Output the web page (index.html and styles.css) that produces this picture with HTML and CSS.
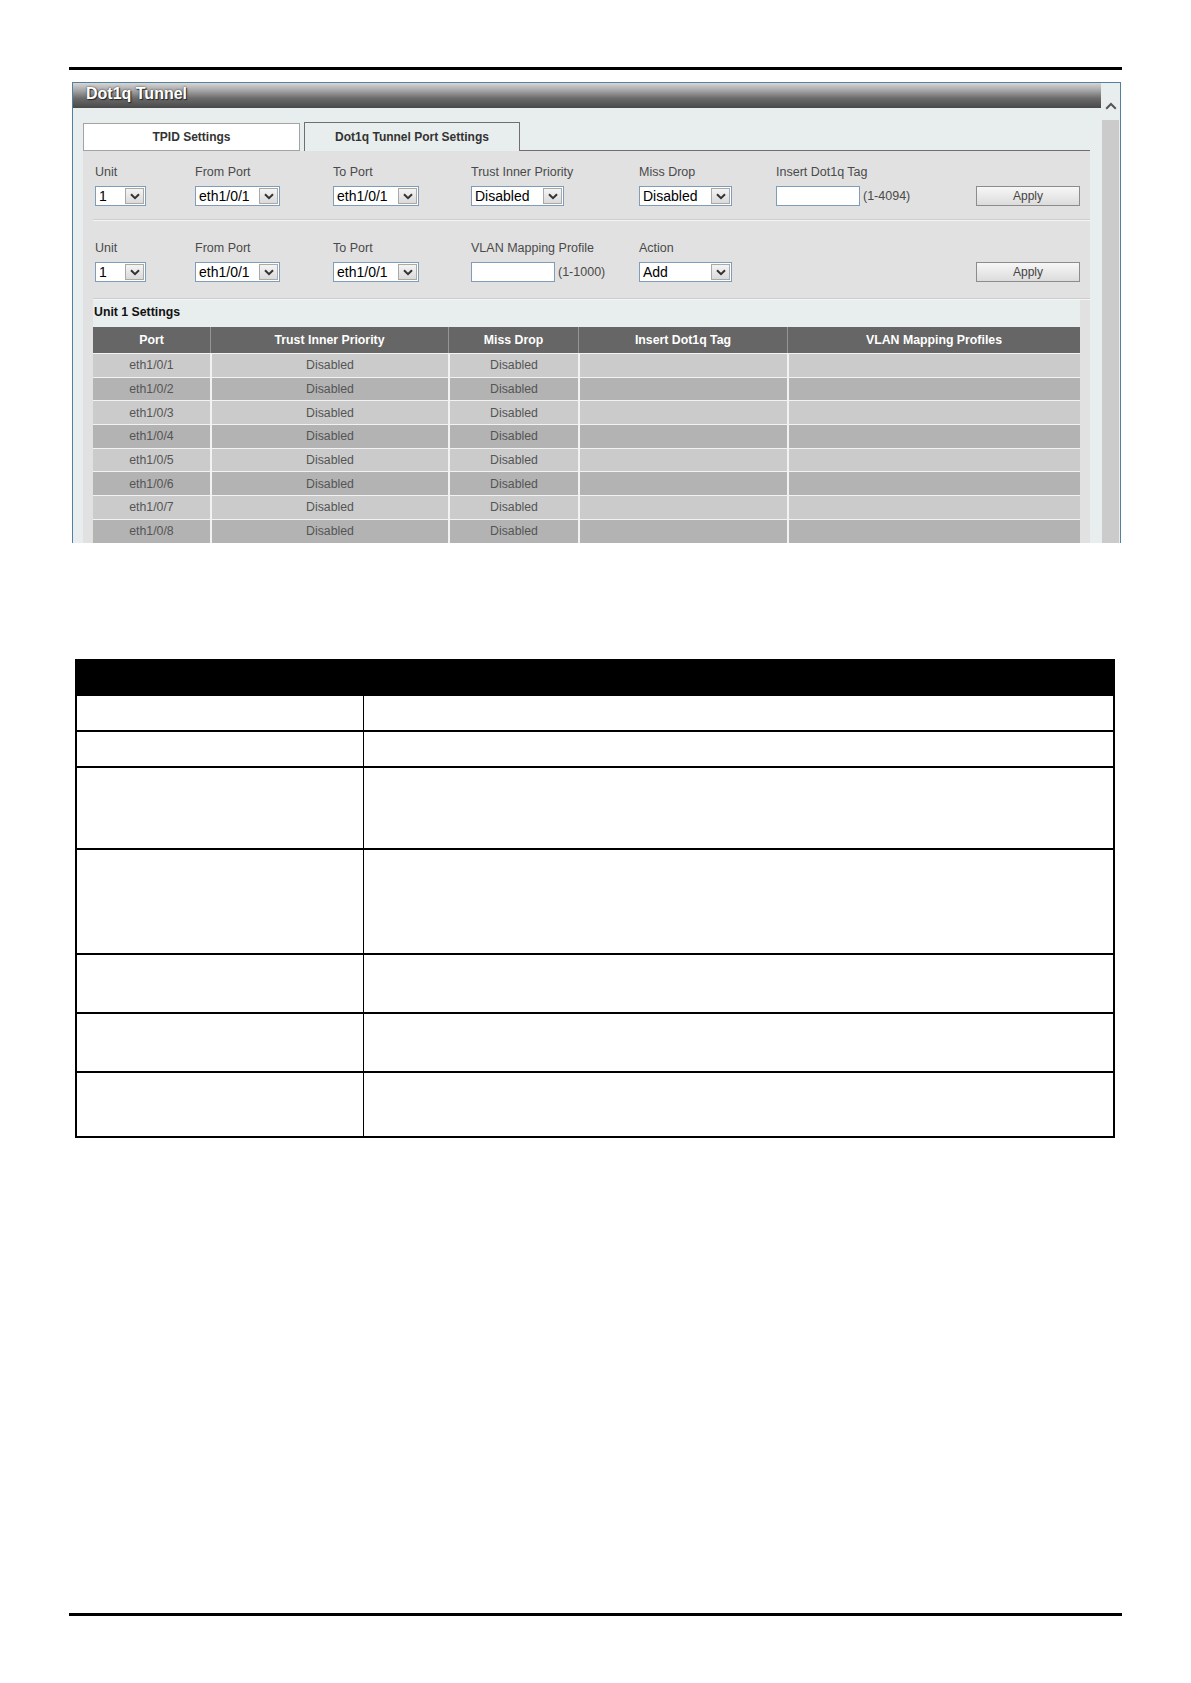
FILE: index.html
```html
<!DOCTYPE html>
<html>
<head>
<meta charset="utf-8">
<title>Dot1q Tunnel</title>
<link rel="stylesheet" href="styles.css">
</head>
<body>
<div class="page">
  <div class="rule top"></div>

  <div class="panel">
    <div class="main">
      <div class="titlebar">Dot1q Tunnel</div>
      <div class="body">
        <div class="tabs">
          <div class="tab">TPID Settings</div>
          <div class="tab active">Dot1q Tunnel Port Settings</div>
          <div class="tabfill"></div>
        </div>
        <div class="formarea">
          <div class="frow r1">
            <div class="field"><div class="lbl">Unit</div>
              <div class="sel w51"><span class="val">1</span><span class="dd"><svg width="10" height="7" viewBox="0 0 10 7"><path d="M1 1.2 L5 5.2 L9 1.2" fill="none" stroke="#333" stroke-width="2"/></svg></span></div></div>
            <div class="field"><div class="lbl">From Port</div>
              <div class="sel w85"><span class="val">eth1/0/1</span><span class="dd"><svg width="10" height="7" viewBox="0 0 10 7"><path d="M1 1.2 L5 5.2 L9 1.2" fill="none" stroke="#333" stroke-width="2"/></svg></span></div></div>
            <div class="field"><div class="lbl">To Port</div>
              <div class="sel w86"><span class="val">eth1/0/1</span><span class="dd"><svg width="10" height="7" viewBox="0 0 10 7"><path d="M1 1.2 L5 5.2 L9 1.2" fill="none" stroke="#333" stroke-width="2"/></svg></span></div></div>
            <div class="field"><div class="lbl">Trust Inner Priority</div>
              <div class="sel w93"><span class="val">Disabled</span><span class="dd"><svg width="10" height="7" viewBox="0 0 10 7"><path d="M1 1.2 L5 5.2 L9 1.2" fill="none" stroke="#333" stroke-width="2"/></svg></span></div></div>
            <div class="field"><div class="lbl">Miss Drop</div>
              <div class="sel w93"><span class="val">Disabled</span><span class="dd"><svg width="10" height="7" viewBox="0 0 10 7"><path d="M1 1.2 L5 5.2 L9 1.2" fill="none" stroke="#333" stroke-width="2"/></svg></span></div></div>
            <div class="field"><div class="lbl">Insert Dot1q Tag</div>
              <div class="ctl"><span class="inp w84"></span><span class="hint">(1-4094)</span></div></div>
            <div class="field btncell"><button class="apply">Apply</button></div>
          </div>
          <div class="sep"></div>
          <div class="frow r2">
            <div class="field"><div class="lbl">Unit</div>
              <div class="sel w51"><span class="val">1</span><span class="dd"><svg width="10" height="7" viewBox="0 0 10 7"><path d="M1 1.2 L5 5.2 L9 1.2" fill="none" stroke="#333" stroke-width="2"/></svg></span></div></div>
            <div class="field"><div class="lbl">From Port</div>
              <div class="sel w85"><span class="val">eth1/0/1</span><span class="dd"><svg width="10" height="7" viewBox="0 0 10 7"><path d="M1 1.2 L5 5.2 L9 1.2" fill="none" stroke="#333" stroke-width="2"/></svg></span></div></div>
            <div class="field"><div class="lbl">To Port</div>
              <div class="sel w86"><span class="val">eth1/0/1</span><span class="dd"><svg width="10" height="7" viewBox="0 0 10 7"><path d="M1 1.2 L5 5.2 L9 1.2" fill="none" stroke="#333" stroke-width="2"/></svg></span></div></div>
            <div class="field"><div class="lbl">VLAN Mapping Profile</div>
              <div class="ctl"><span class="inp w84"></span><span class="hint">(1-1000)</span></div></div>
            <div class="field"><div class="lbl">Action</div>
              <div class="sel w93"><span class="val">Add</span><span class="dd"><svg width="10" height="7" viewBox="0 0 10 7"><path d="M1 1.2 L5 5.2 L9 1.2" fill="none" stroke="#333" stroke-width="2"/></svg></span></div></div>
            <div class="field"></div>
            <div class="field btncell"><button class="apply">Apply</button></div>
          </div>
          <div class="sep"></div>

          <div class="unitbar">Unit 1 Settings</div>
          <table class="ports">
            <colgroup><col class="c1"><col class="c2"><col class="c3"><col class="c4"><col class="c5"></colgroup>
            <thead>
              <tr><th>Port</th><th>Trust Inner Priority</th><th>Miss Drop</th><th>Insert Dot1q Tag</th><th>VLAN Mapping Profiles</th></tr>
            </thead>
            <tbody>
              <tr><td>eth1/0/1</td><td>Disabled</td><td>Disabled</td><td></td><td></td></tr>
              <tr><td>eth1/0/2</td><td>Disabled</td><td>Disabled</td><td></td><td></td></tr>
              <tr><td>eth1/0/3</td><td>Disabled</td><td>Disabled</td><td></td><td></td></tr>
              <tr><td>eth1/0/4</td><td>Disabled</td><td>Disabled</td><td></td><td></td></tr>
              <tr><td>eth1/0/5</td><td>Disabled</td><td>Disabled</td><td></td><td></td></tr>
              <tr><td>eth1/0/6</td><td>Disabled</td><td>Disabled</td><td></td><td></td></tr>
              <tr><td>eth1/0/7</td><td>Disabled</td><td>Disabled</td><td></td><td></td></tr>
              <tr><td>eth1/0/8</td><td>Disabled</td><td>Disabled</td><td></td><td></td></tr>
            </tbody>
          </table>
        </div>
      </div>
    </div>
    <div class="scroll">
      <div class="up"><svg width="12" height="8" viewBox="0 0 12 8"><path d="M1.2 6.8 L6 2 L10.8 6.8" fill="none" stroke="#555" stroke-width="2"/></svg></div>
      <div class="track"></div>
    </div>
  </div>

  <div class="desc">
    <div class="dhead"></div>
    <div class="drow ha"><div class="dc1"></div><div class="dc2"></div></div>
    <div class="drow hb"><div class="dc1"></div><div class="dc2"></div></div>
    <div class="drow hc"><div class="dc1"></div><div class="dc2"></div></div>
    <div class="drow hd"><div class="dc1"></div><div class="dc2"></div></div>
    <div class="drow he"><div class="dc1"></div><div class="dc2"></div></div>
    <div class="drow he"><div class="dc1"></div><div class="dc2"></div></div>
    <div class="drow hf"><div class="dc1"></div><div class="dc2"></div></div>
  </div>

  <div class="rule bottom"></div>
</div>
</body>
</html>
```

FILE: styles.css
```css
* { box-sizing: border-box; }
html, body { margin: 0; padding: 0; background: #fff; }
body { font-family: "Liberation Sans", Arial, sans-serif; }

.page { width: 1191px; min-height: 1683px; padding-top: 67px; }

.rule { height: 3px; background: #000; margin-left: 69px; width: 1053px; }
.rule.bottom { margin-top: 475px; }

/* ---------- panel ---------- */
.panel {
  margin-top: 12px;
  margin-left: 72px;
  width: 1049px;
  height: 461px;
  border: 1px solid #52809e;
  border-bottom: 0;
  background: #e8eded;
  display: flex;
  overflow: hidden;
}
.main { width: 1028px; display: flex; flex-direction: column; }
.titlebar {
  height: 25px;
  line-height: 22px;
  padding-left: 13px;
  color: #fff;
  font-weight: bold;
  font-size: 16px;
  text-shadow: 0 0 2px #333, 1px 1px 1px #222;
  background: linear-gradient(#d6d6d6 0%, #a9a9a9 28%, #6a6a6a 62%, #484848 100%);
}
.body { padding: 14px 11px 0 10px; flex: 1; display: flex; flex-direction: column; }

.tabs { display: flex; align-items: flex-end; height: 29px; }
.tab {
  height: 28px;
  width: 217px;
  border: 1px solid #a3a3a3;
  background: #fff;
  font-size: 12px;
  font-weight: bold;
  color: #333;
  text-align: center;
  line-height: 26px;
}
.tab.active {
  height: 29px;
  width: 216px;
  margin-left: 4px;
  border-color: #6f6f6f;
  border-bottom: 0;
  background: #e8eded;
  line-height: 28px;
}
.tabfill { flex: 1; height: 29px; border-bottom: 1px solid #6f6f6f; }

.formarea { flex: 1; background: #e1e1e1; }

.frow {
  display: grid;
  grid-template-columns: 100px 138px 138px 168px 137px 200px 104px;
  padding-left: 12px;
}
.frow.r1 { padding-top: 14px; padding-bottom: 13px; }
.frow.r2 { padding-top: 20px; padding-bottom: 16px; }
.field { display: flex; flex-direction: column; }
.lbl { font-size: 12.5px; line-height: 14px; color: #4a4a4a; margin-bottom: 7px; white-space: nowrap; }
.btncell { justify-content: flex-end; }

.sel {
  height: 20px;
  border: 1px solid #7f9db9;
  background: #fff;
  display: flex;
  align-items: center;
  justify-content: space-between;
  padding: 1px;
}
.sel .val { font-size: 14px; color: #000; padding-left: 2px; line-height: 16px; }
.sel .dd {
  width: 19px; height: 16px;
  border: 1px solid #a9a9a9;
  background: linear-gradient(#f4f4f4, #dadada);
  display: flex; align-items: center; justify-content: center;
}
.w51 { width: 51px; }
.w85 { width: 85px; }
.w86 { width: 86px; }
.w93 { width: 93px; }
.w84 { width: 84px; }

.ctl { display: flex; align-items: center; height: 20px; }
.inp { display: block; height: 20px; border: 1px solid #7f9db9; background: #fff; }
.hint { font-size: 12.5px; color: #4a4a4a; margin-left: 3px; }

.apply {
  width: 104px; height: 20px;
  border: 1px solid #8c8c8c;
  background: linear-gradient(#f7f7f7, #dcdcdc);
  font-family: "Liberation Sans", Arial, sans-serif;
  font-size: 12px;
  color: #444;
  padding: 0;
}

.sep { height: 2px; margin-left: 10px; border-top: 1px solid #cdcdcd; border-bottom: 1px solid #f5f5f5; }

.unitbar {
  margin: 0 10px;
  height: 27px;
  line-height: 25px;
  background: #e8eded;
  font-size: 12.3px;
  font-weight: bold;
  color: #111;
  padding-left: 1px;
}

.ports {
  margin: 0 10px;
  width: 987px;
  table-layout: fixed;
  border-collapse: separate;
  border-spacing: 0;
  font-size: 12.3px;
}
.c1 { width: 117px; } .c2 { width: 238px; } .c3 { width: 130px; } .c4 { width: 209px; } .c5 { width: 293px; }
.ports th {
  height: 26px;
  background: #666;
  color: #fff;
  font-weight: bold;
  padding: 0;
  border-left: 1px solid #959595;
}
.ports th:first-child, .ports td:first-child { border-left: 0; }
.ports td {
  height: 23.7px;
  padding: 0;
  text-align: center;
  color: #555;
  border-top: 1px solid #f2f2f2;
  border-left: 2px solid #f2f2f2;
}
.ports tbody tr:nth-child(odd) td { background: #cbcbcb; }
.ports tbody tr:nth-child(even) td { background: #b3b3b3; }

.scroll { width: 19px; display: flex; flex-direction: column; }
.scroll .up { height: 37px; padding-top: 19px; display: flex; justify-content: center; align-items: flex-start; }
.scroll .track { flex: 1; margin: 0 1px; background: #cbcbcb; }

/* ---------- description table ---------- */
.desc {
  margin-top: 116px;
  margin-left: 75px;
  width: 1040px;
  border-left: 2px solid #000;
  border-right: 2px solid #000;
}
.dhead { height: 37px; background: #000; margin: 0 -2px; }
.drow { display: flex; border-bottom: 2px solid #000; }
.dc1 { width: 287px; border-right: 1px solid #000; }
.dc2 { flex: 1; }
.ha { height: 36px; } .hb { height: 36px; } .hc { height: 82px; } .hd { height: 105px; }
.he { height: 59px; } .hf { height: 65px; }
```
